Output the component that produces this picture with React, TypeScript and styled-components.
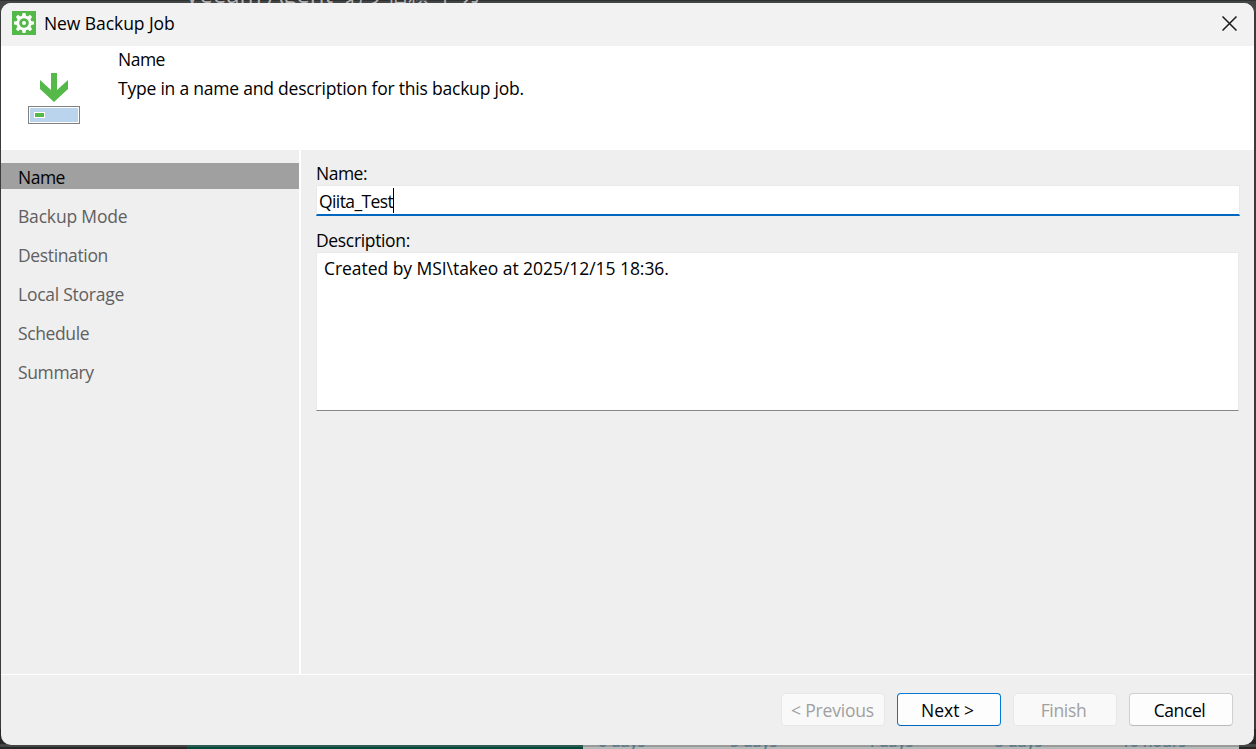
import React from "react";
import styled, { createGlobalStyle } from "styled-components";

const Global = createGlobalStyle`
  * { box-sizing: border-box; }
  html, body { margin: 0; overflow: hidden; }
  body { font: 17.5px/26px "Open Sans", "Noto Sans", "Noto Sans CJK JP", sans-serif; color: #000; }
`;

const Desktop = styled.div`
  position: relative;
  width: 1256px;
  height: 749px;
  padding: 3px 2px 4px 1px;
  overflow: hidden;
  background: #393a3a;
`;

const TopStrip = styled.div`
  position: absolute;
  top: 0;
  left: 0;
  width: 1256px;
  height: 12px;
  overflow: hidden;
  background: linear-gradient(#303231 0 1px, #444545 1px);
`;

const TopCaption = styled.div`
  position: absolute;
  top: -21px;
  left: 185px;
  display: flex;
  gap: 12px;
  font-size: 24px;
  line-height: 30px;
  white-space: nowrap;
  color: #b4b4b4;
`;

const CaptionKana = styled.span`
  font-size: 21px;
`;

const BottomStrip = styled.div`
  position: absolute;
  left: 0;
  bottom: 0;
  width: 1256px;
  height: 20px;
  display: flex;
  overflow: hidden;
  background: #252827;
`;

const Band = styled.div<{ $w: number; $color: string }>`
  flex: none;
  position: relative;
  width: ${(p) => p.$w}px;
  background: ${(p) => p.$color};
`;

const Shade = styled.div`
  position: absolute;
  left: 0;
  bottom: 2px;
  width: 1256px;
  height: 3px;
  background: rgba(110, 112, 112, 0.42);
`;

const Age = styled.span<{ $x: number }>`
  position: absolute;
  left: ${(p) => p.$x}px;
  top: 2px;
  font-size: 15.5px;
  line-height: 20px;
  font-weight: 600;
  color: #4f7f96;
  white-space: nowrap;
`;

const Dialog = styled.div`
  position: relative;
  height: 742px;
  display: flex;
  flex-direction: column;
  overflow: hidden;
  border-radius: 10px;
  background: #efefef;
`;

const TitleBar = styled.div`
  height: 43px;
  flex: none;
  display: flex;
  align-items: center;
  padding: 0 17px 3px 11px;
  background: #f2f2f2;
`;

const Fit = styled.span<{ $ls?: number }>`
  letter-spacing: ${(p) => p.$ls ?? 0}px;
  white-space: pre;
`;

const Title = styled.div`
  flex: 1;
  margin-left: 8px;
`;

const Header = styled.div`
  height: 104px;
  flex: none;
  display: flex;
  background: #fff;
`;

const HeaderIcon = styled.div`
  width: 117px;
  padding: 27px 0 0 27px;
  svg { display: block; }
`;

const HeaderText = styled.div`
  display: flex;
  flex-direction: column;
  gap: 3px;
`;

const Body = styled.div`
  flex: 1;
  display: flex;
  border-bottom: 1px solid #fff;
`;

const Steps = styled.nav`
  width: 300px;
  display: flex;
  flex-direction: column;
  gap: 13px;
  padding-top: 13px;
  border-right: 2px solid #fff;
`;

const Step = styled.div<{ $active?: boolean }>`
  height: 26px;
  padding: 1px 0 0 17px;
  color: ${(p) => (p.$active ? "#000" : "#606060")};
  background: ${(p) => (p.$active ? "#a0a0a0" : "transparent")};
`;

const Form = styled.div`
  width: 939px;
  padding: 10px 0 0 15px;
`;

const Label = styled.div`
  height: 25px;
`;

const NameField = styled.div`
  height: 31px;
  display: flex;
  align-items: center;
  margin-bottom: 11px;
  padding: 1px 0 0 2px;
  background: #fff;
  border: 1px solid #e9e9e9;
  border-bottom: 2px solid #0067c0;
`;

const Caret = styled.span`
  width: 1px;
  height: 25px;
  background: #000;
`;

const Description = styled.div`
  height: 159px;
  width: 923px;
  padding: 2px 7px;
  background: #fff;
  border: 1px solid #e9e9e9;
  border-bottom-color: #868686;
`;

const Footer = styled.div`
  height: 70px;
  flex: none;
  display: flex;
  justify-content: flex-end;
  gap: 12px;
  padding: 18px 21px 0 0;
`;

const Button = styled.button<{ $primary?: boolean }>`
  width: 104px;
  height: 33px;
  padding: 1px 3px 0 0;
  font: inherit;
  color: #000;
  background: #fdfdfd;
  border: 1px solid ${(p) => (p.$primary ? "#0078d4" : "#d0d0d0")};
  border-bottom-color: ${(p) => (p.$primary ? "#0067c0" : "#bababa")};
  border-radius: 4px;
  &:disabled {
    color: #a0a0a0;
    background: #f9f9f9;
    border-color: #e7e7e7;
  }
`;

const PreviousButton = styled(Button)`
  padding-right: 1px;
`;

const teeth = [0, 45, 90, 135, 180, 225, 270, 315];

const GearLogo = () => (
  <svg width="24" height="24" viewBox="0 0 24 24">
    <rect width="24" height="24" fill="#54b948" />
    {teeth.map((a) => (
      <path key={a} d="M10 5.5 10.5 2h3L14 5.5z" fill="#fff" transform={`rotate(${a} 12 12)`} />
    ))}
    <circle cx="12" cy="12" r="6.2" fill="none" stroke="#fff" strokeWidth="2.8" />
    <circle cx="12" cy="12" r="2" fill="#fff" />
  </svg>
);

const JobIcon = () => (
  <svg width="52" height="51" viewBox="0 0 52 51">
    <path d="M23 0h6v17l11-10v9L26 29 12 16V7l11 10z" fill="#54b948" />
    <rect x=".5" y="33.5" width="51" height="17" fill="#fff" stroke="#808080" />
    <rect x="2" y="35" width="48" height="14" fill="#bbd4ed" />
    <rect x="6" y="39" width="11" height="6" fill="#fff" />
    <rect x="7" y="40" width="9" height="4" fill="#54b948" />
  </svg>
);

const CloseIcon = () => (
  <svg width="15" height="15" viewBox="0 0 15 15">
    <path d="M.5.5l14 14M14.5.5l-14 14" stroke="#1a1a1a" strokeWidth="1.5" />
  </svg>
);

const steps = [
  { label: "Name", ls: -0.5 },
  { label: "Backup Mode", ls: -0.18 },
  { label: "Destination", ls: -0.36 },
  { label: "Local Storage", ls: -0.25 },
  { label: "Schedule", ls: -0.38 },
  { label: "Summary", ls: -0.38 },
];

export default function App() {
  return (
    <>
      <Global />
      <Desktop>
        <TopStrip>
          <TopCaption>
            <span>Veeam Agent</span>
            <CaptionKana>必ず信頼 了 カ</CaptionKana>
          </TopCaption>
        </TopStrip>
        <BottomStrip>
          <Band $w={187} $color="#252827" />
          <Band $w={396} $color="#004a3b" />
          <Band $w={656} $color="#b9bbba">
            <Age $x={15}>6 days</Age>
            <Age $x={147}>5 days</Age>
            <Age $x={283}>4 days</Age>
            <Age $x={412}>3 days</Age>
            <Age $x={538}>16 hours</Age>
          </Band>
        </BottomStrip>
        <Shade />
        <Dialog>
          <TitleBar>
            <GearLogo />
            <Title><Fit $ls={-0.07}>New Backup Job</Fit></Title>
            <CloseIcon />
          </TitleBar>
          <Header>
            <HeaderIcon><JobIcon /></HeaderIcon>
            <HeaderText>
              <div><Fit $ls={-0.5}>Name</Fit></div>
              <div><Fit $ls={-0.215}>Type in a name and description for this backup job.</Fit></div>
            </HeaderText>
          </Header>
          <Body>
            <Steps>
              {steps.map((s, i) => (
                <Step key={s.label} $active={i === 0}><Fit $ls={s.ls}>{s.label}</Fit></Step>
              ))}
            </Steps>
            <Form>
              <Label><Fit $ls={-0.5}>Name:</Fit></Label>
              <NameField><Fit $ls={-0.6}>Qiita_Test</Fit><Caret /></NameField>
              <Label><Fit $ls={-0.34}>Description:</Fit></Label>
              <Description><Fit $ls={-0.05}>Created by MSI\takeo at 2025/12/15 18:36.</Fit></Description>
            </Form>
          </Body>
          <Footer>
            <PreviousButton disabled><Fit $ls={-0.2}>{"< Previous"}</Fit></PreviousButton>
            <Button $primary><Fit>{"Next >"}</Fit></Button>
            <Button disabled><Fit $ls={-0.33}>Finish</Fit></Button>
            <Button><Fit $ls={-0.4}>Cancel</Fit></Button>
          </Footer>
        </Dialog>
      </Desktop>
    </>
  );
}
